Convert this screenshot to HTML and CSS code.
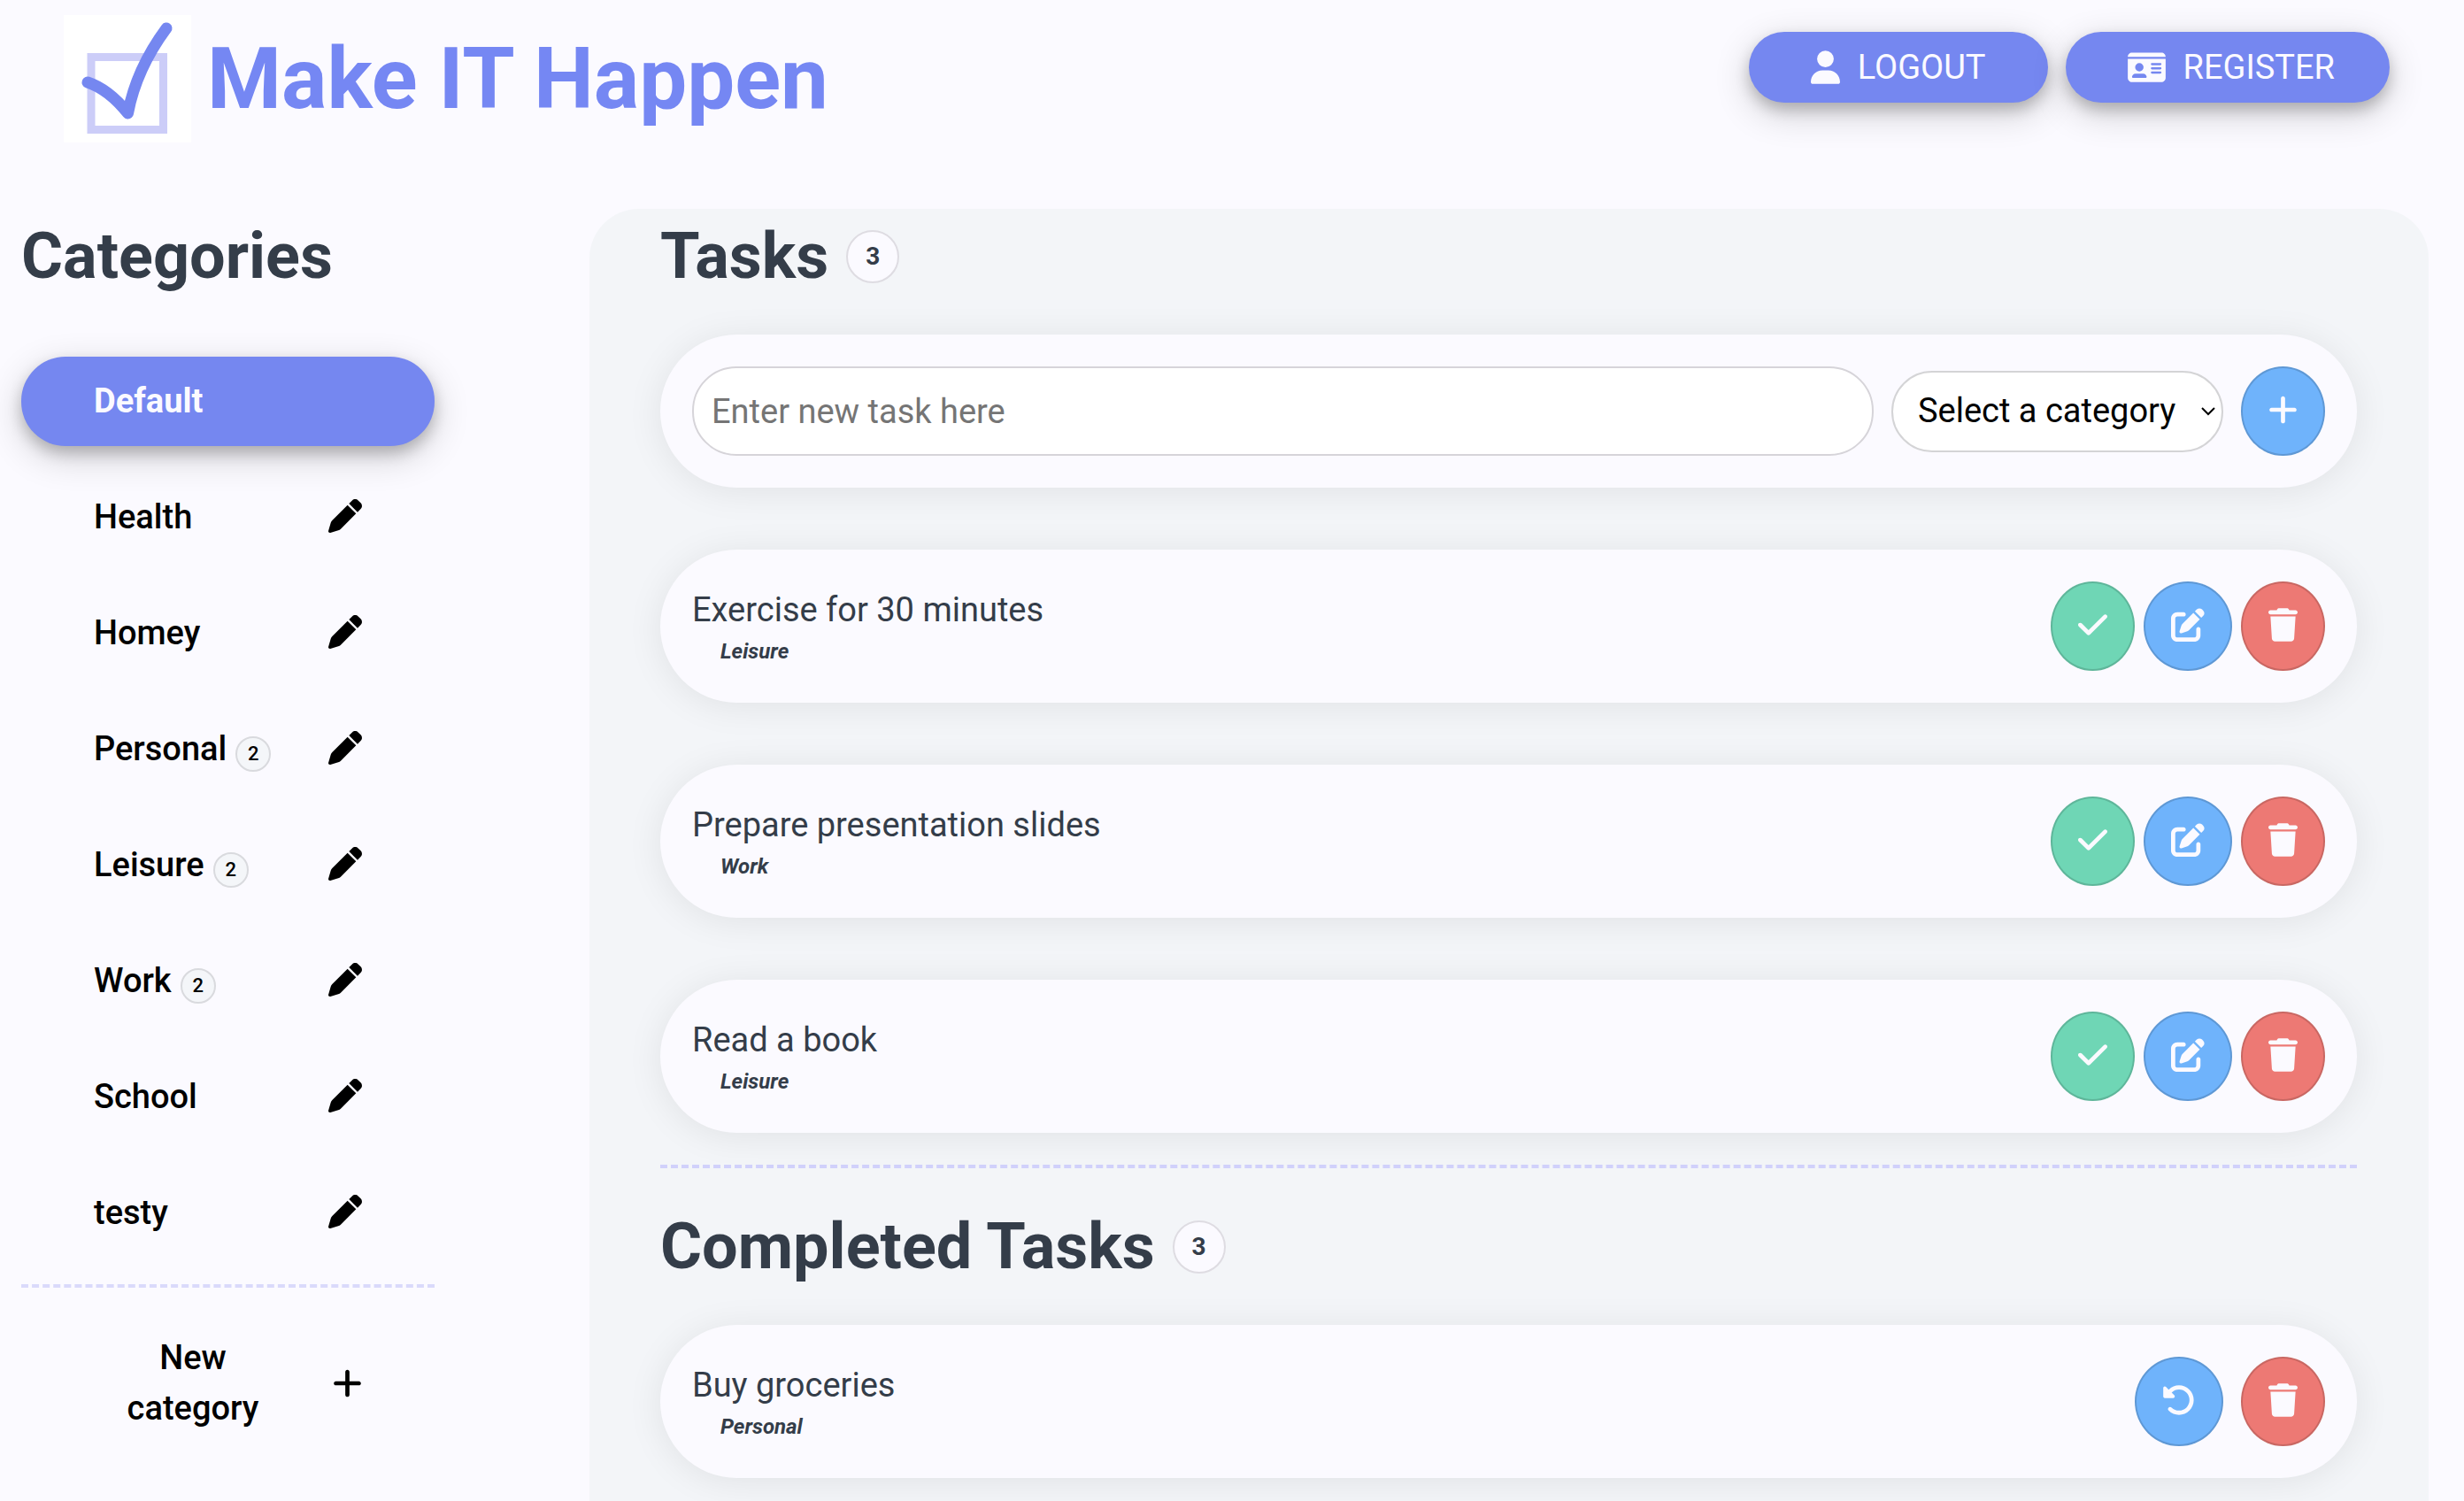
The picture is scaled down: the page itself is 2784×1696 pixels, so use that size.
FILE: index.html
```html
<!DOCTYPE html>
<html lang="en">
<head>
<meta charset="utf-8">
<meta name="viewport" content="width=device-width, initial-scale=1">
<title>Make IT Happen</title>
<link rel="stylesheet" href="styles.css">
</head>
<body>
<svg class="sprite" aria-hidden="true">
  <symbol id="user" viewBox="0 0 448 512"><path d="M224 256A128 128 0 1 0 224 0a128 128 0 1 0 0 256zm-45.7 48C79.8 304 0 383.8 0 482.3C0 498.7 13.3 512 29.7 512H418.3c16.4 0 29.7-13.3 29.7-29.7C448 383.8 368.2 304 269.7 304H178.3z"/></symbol>
  <symbol id="id-card" viewBox="0 0 576 512"><path d="M0 96l576 0c0-35.3-28.7-64-64-64H64C28.7 32 0 60.7 0 96zm0 32V416c0 35.3 28.7 64 64 64H512c35.3 0 64-28.7 64-64V128H0zM64 405.3c0-29.5 23.9-53.3 53.3-53.3H234.7c29.5 0 53.3 23.9 53.3 53.3c0 5.9-4.8 10.7-10.7 10.7H74.7c-5.9 0-10.7-4.8-10.7-10.7zM176 192a64 64 0 1 1 0 128 64 64 0 1 1 0-128zm176 16c0-8.800 7.200-16 16-16H496c8.800 0 16 7.200 16 16s-7.200 16-16 16H368c-8.800 0-16-7.200-16-16zm0 64c0-8.800 7.200-16 16-16H496c8.800 0 16 7.200 16 16s-7.200 16-16 16H368c-8.800 0-16-7.200-16-16zm0 64c0-8.800 7.200-16 16-16H496c8.800 0 16 7.200 16 16s-7.200 16-16 16H368c-8.800 0-16-7.200-16-16z"/></symbol>
  <symbol id="pen" viewBox="0 0 512 512"><path d="M362.700 19.300L314.300 67.700 444.300 197.700l48.400-48.400c25-25 25-65.500 0-90.500L453.300 19.300c-25-25-65.500-25-90.500 0zm-71 71L58.600 323.500c-10.400 10.400-18 23.300-22.200 37.400L1 481.200C-1.500 489.700 .8 498.800 7 505s15.300 8.500 23.700 6.100l120.300-35.400c14.100-4.200 27-11.800 37.400-22.200L421.700 220.300 291.700 90.300z"/></symbol>
  <symbol id="plus" viewBox="0 0 448 512"><path d="M256 80c0-17.700-14.300-32-32-32s-32 14.300-32 32V224H48c-17.700 0-32 14.300-32 32s14.300 32 32 32H192V432c0 17.700 14.300 32 32 32s32-14.300 32-32V288H400c17.700 0 32-14.300 32-32s-14.300-32-32-32H256V80z"/></symbol>
  <symbol id="check" viewBox="0 0 448 512"><path d="M438.600 105.400c12.500 12.500 12.500 32.800 0 45.300l-256 256c-12.500 12.500-32.800 12.500-45.300 0l-128-128c-12.500-12.500-12.500-32.800 0-45.300s32.800-12.500 45.300 0L160 338.700 393.400 105.400c12.500-12.500 32.800-12.500 45.300 0z"/></symbol>
  <symbol id="edit" viewBox="0 0 512 512"><path d="M471.600 21.700c-21.900-21.900-57.300-21.900-79.200 0L362.300 51.700l97.900 97.900 30.100-30.100c21.900-21.900 21.900-57.300 0-79.200L471.600 21.700zm-299.200 220c-6.100 6.100-10.800 13.600-13.500 21.900l-29.600 88.800c-2.900 8.600-.6 18.100 5.800 24.600s15.900 8.700 24.600 5.800l88.800-29.600c8.200-2.700 15.700-7.400 21.900-13.500L437.700 172.300 339.700 74.300 172.400 241.700zM96 64C43 64 0 107 0 160V416c0 53 43 96 96 96H352c53 0 96-43 96-96V320c0-17.700-14.300-32-32-32s-32 14.300-32 32v96c0 17.700-14.300 32-32 32H96c-17.700 0-32-14.300-32-32V160c0-17.700 14.300-32 32-32h96c17.700 0 32-14.300 32-32s-14.300-32-32-32H96z"/></symbol>
  <symbol id="trash" viewBox="0 0 448 512"><path d="M135.200 17.700L128 32H32C14.300 32 0 46.300 0 64S14.300 96 32 96H416c17.700 0 32-14.300 32-32s-14.300-32-32-32H320l-7.200-14.300C307.400 6.800 296.300 0 284.200 0H163.800c-12.100 0-23.200 6.800-28.600 17.700zM416 128H32L53.200 467c1.600 25.300 22.600 45 47.900 45H346.900c25.300 0 46.300-19.700 47.900-45L416 128z"/></symbol>
  <symbol id="undo" viewBox="0 0 512 512"><path d="M48.500 224H40c-13.300 0-24-10.700-24-24V72c0-9.700 5.800-18.500 14.800-22.200s19.300-1.700 26.200 5.200L98.600 96.600c87.600-86.500 228.700-86.200 315.800 1c87.500 87.500 87.500 229.300 0 316.800s-229.300 87.500-316.800 0c-12.500-12.500-12.500-32.800 0-45.300s32.800-12.500 45.300 0c62.500 62.500 163.800 62.500 226.300 0s62.500-163.800 0-226.300c-62.200-62.200-162.700-62.500-225.300-1L185 183c6.900 6.900 8.900 17.200 5.200 26.200s-12.500 14.800-22.200 14.800H48.500z"/></symbol>
</svg>

<header class="header">
  <a class="brand" href="#">
    <svg class="logo" viewBox="0 0 144 144" aria-hidden="true">
      <rect width="144" height="144" fill="#fff"/>
      <rect x="31" y="47.500" width="81.500" height="82" fill="none" stroke="#cccdf8" stroke-width="9"/>
      <path d="M27 76Q51 84 72.500 111Q82 61 116 15" fill="none" stroke="#7587f0" stroke-width="13" stroke-linecap="round" stroke-linejoin="round"/>
    </svg>
    <h1 class="title">Make IT Happen</h1>
  </a>
  <nav class="nav">
    <a class="nav-link" href="#logout"><svg class="icon narrow" aria-hidden="true"><use href="#user"/></svg>LOGOUT</a>
    <a class="nav-link register" href="#register"><svg class="icon wide" aria-hidden="true"><use href="#id-card"/></svg>REGISTER</a>
  </nav>
</header>

<div class="layout">
  <aside class="sidebar">
    <h2 class="heading">Categories</h2>
    <ul class="categories">
      <li class="category active"><a class="category-link" href="#default">Default</a></li>
      <li class="category"><a class="category-link" href="#health">Health</a><button class="plain" aria-label="Edit Health"><svg class="icon"><use href="#pen"/></svg></button></li>
      <li class="category"><a class="category-link" href="#homey">Homey</a><button class="plain" aria-label="Edit Homey"><svg class="icon"><use href="#pen"/></svg></button></li>
      <li class="category"><a class="category-link" href="#personal">Personal<span class="count">2</span></a><button class="plain" aria-label="Edit Personal"><svg class="icon"><use href="#pen"/></svg></button></li>
      <li class="category"><a class="category-link" href="#leisure">Leisure<span class="count">2</span></a><button class="plain" aria-label="Edit Leisure"><svg class="icon"><use href="#pen"/></svg></button></li>
      <li class="category"><a class="category-link" href="#work">Work<span class="count">2</span></a><button class="plain" aria-label="Edit Work"><svg class="icon"><use href="#pen"/></svg></button></li>
      <li class="category"><a class="category-link" href="#school">School</a><button class="plain" aria-label="Edit School"><svg class="icon"><use href="#pen"/></svg></button></li>
      <li class="category"><a class="category-link" href="#testy">testy</a><button class="plain" aria-label="Edit testy"><svg class="icon"><use href="#pen"/></svg></button></li>
    </ul>
    <hr class="divider">
    <button class="new-category"><span>New category</span><svg class="icon narrow" aria-hidden="true"><use href="#plus"/></svg></button>
  </aside>

  <main class="panel">
    <h2 class="heading">Tasks<span class="total">3</span></h2>
    <div class="cards">
      <form class="card task-form">
        <input class="task-input" type="text" aria-label="New task" placeholder="Enter new task here">
        <span class="select-wrap">
          <select class="select" aria-label="Category">
            <option>Select a category</option>
            <option>Health</option>
            <option>Homey</option>
            <option>Personal</option>
            <option>Leisure</option>
            <option>Work</option>
            <option>School</option>
            <option>testy</option>
          </select>
          <svg class="arrow" viewBox="0 0 16 10" aria-hidden="true"><path d="M1 1l7 7 7-7"/></svg>
        </span>
        <button class="action blue" type="button" aria-label="Add task"><svg class="icon narrow"><use href="#plus"/></svg></button>
      </form>
      <article class="card">
        <div class="task"><p class="task-name">Exercise for 30 minutes</p><p class="task-category">Leisure</p></div>
        <div class="actions">
          <button class="action green" aria-label="Complete"><svg class="icon narrow"><use href="#check"/></svg></button>
          <button class="action blue" aria-label="Edit"><svg class="icon"><use href="#edit"/></svg></button>
          <button class="action red" aria-label="Delete"><svg class="icon narrow"><use href="#trash"/></svg></button>
        </div>
      </article>
      <article class="card">
        <div class="task"><p class="task-name">Prepare presentation slides</p><p class="task-category">Work</p></div>
        <div class="actions">
          <button class="action green" aria-label="Complete"><svg class="icon narrow"><use href="#check"/></svg></button>
          <button class="action blue" aria-label="Edit"><svg class="icon"><use href="#edit"/></svg></button>
          <button class="action red" aria-label="Delete"><svg class="icon narrow"><use href="#trash"/></svg></button>
        </div>
      </article>
      <article class="card">
        <div class="task"><p class="task-name">Read a book</p><p class="task-category">Leisure</p></div>
        <div class="actions">
          <button class="action green" aria-label="Complete"><svg class="icon narrow"><use href="#check"/></svg></button>
          <button class="action blue" aria-label="Edit"><svg class="icon"><use href="#edit"/></svg></button>
          <button class="action red" aria-label="Delete"><svg class="icon narrow"><use href="#trash"/></svg></button>
        </div>
      </article>
    </div>
    <hr class="divider section-divider">
    <h2 class="heading">Completed Tasks<span class="total">3</span></h2>
    <div class="cards">
      <article class="card">
        <div class="task"><p class="task-name">Buy groceries</p><p class="task-category">Personal</p></div>
        <div class="actions done">
          <button class="action blue" aria-label="Restore"><svg class="icon"><use href="#undo"/></svg></button>
          <button class="action red" aria-label="Delete"><svg class="icon narrow"><use href="#trash"/></svg></button>
        </div>
      </article>
    </div>
  </main>
</div>
</body>
</html>
```
FILE: styles.css
```css
* { box-sizing: border-box; }

body {
  display: flex;
  flex-direction: column;
  min-height: 100vh;
  margin: 0;
  background: #fbfaff;
  color: #343d49;
  font: 400 38px/57px Roboto, "Noto Sans", sans-serif;
}

h1, h2, p, ul { margin: 0; padding: 0; }
ul { list-style: none; }
a { color: inherit; text-decoration: none; }
button, input, select { margin: 0; font: inherit; }
button { cursor: pointer; }

.sprite { display: none; }

.icon {
  flex: none;
  display: block;
  width: 38px;
  height: 38px;
  fill: currentColor;
}
.icon.narrow { width: 33px; }
.icon.wide { width: 43px; }

/* Header */
.header {
  display: flex;
  justify-content: space-between;
  padding: 17px 84px 75px 72px;
}
.brand {
  display: flex;
  align-items: center;
  gap: 18px;
}
.logo { width: 144px; height: 144px; }
.title {
  color: #7587f3;
  font-size: 96px;
  line-height: 116px;
}
.nav {
  display: flex;
  align-items: flex-start;
  gap: 20px;
  padding-top: 19px;
}
.nav-link {
  display: flex;
  align-items: center;
  gap: 20px;
  height: 80px;
  padding: 0 70px;
  border-radius: 40px;
  background: #7587f0;
  color: #fbfaff;
  box-shadow: 0 8px 16px rgba(0, 0, 0, 0.2), 0 12px 40px rgba(0, 0, 0, 0.19);
}
.nav-link.register { padding-right: 62px; }

.layout {
  flex: 1;
  display: grid;
  grid-template-columns: 467px 1fr;
  gap: 175px;
  padding: 0 40px 0 24px;
}

.heading {
  display: flex;
  align-items: center;
  gap: 20px;
  font-size: 72px;
  line-height: 86px;
}
.divider {
  width: 100%;
  margin: 0;
  border: 0;
  border-top: 4px dashed #d1d1fb;
}

/* Sidebar */
.sidebar { padding-top: 11px; color: #000; }
.sidebar .heading { margin-bottom: 70px; color: #343d49; }
.sidebar .divider { border-color: #dadafb; }
.categories {
  display: grid;
  gap: 30px;
  margin-bottom: 30px;
}
.category, .new-category {
  display: flex;
  align-items: center;
  justify-content: space-between;
  width: 100%;
  padding: 22px 82px;
  font-weight: 500;
}
.category {
  height: 101px;
  border-radius: 50px;
}
.category.active {
  background: #7587f0;
  color: #fbfaff;
  font-weight: 700;
  box-shadow: 0 8px 16px rgba(0, 0, 0, 0.2), 0 12px 40px rgba(0, 0, 0, 0.19);
}
.category-link {
  display: flex;
  align-items: center;
  gap: 10px;
}
.count {
  width: 40px;
  height: 40px;
  margin-top: 10px;
  border: 2px solid #d9dade;
  border-radius: 50%;
  background: #f4f6f9;
  font-size: 22px;
  line-height: 36px;
  text-align: center;
}
.plain {
  padding: 0 0 4px;
  border: 0;
  background: none;
  color: inherit;
}
.new-category {
  gap: 46px;
  margin-top: 29px;
  border: 0;
  background: none;
  color: inherit;
}

/* Task panel */
.panel {
  padding: 11px 81px 22px 80px;
  border-radius: 56px 56px 0 0;
  background: #f3f5f8;
}
.total {
  width: 60px;
  height: 60px;
  border: 2px solid #dedce2;
  border-radius: 50%;
  background: #fbfaff;
  font-size: 28px;
  line-height: 56px;
  text-align: center;
}
.cards {
  display: grid;
  gap: 70px;
  margin-top: 45px;
}
.section-divider { margin: 36px 0 46px; }

.card {
  display: flex;
  align-items: center;
  justify-content: space-between;
  gap: 20px;
  min-height: 173px;
  padding: 36px;
  border-radius: 87px;
  background: #fbfaff;
  box-shadow: 0 4px 40px rgba(0, 0, 0, 0.08);
}
.task-category {
  padding-left: 32px;
  font-size: 24px;
  font-style: italic;
  font-weight: 700;
  line-height: 36px;
}
.task-input {
  flex: 1;
  min-width: 0;
  height: 101px;
  padding: 0 20px;
  border: 2px solid #d6d4d9;
  border-radius: 50px;
  background: #fff;
}
.task-input::placeholder { color: #757575; }

.select-wrap { display: grid; width: 375px; }
.select {
  grid-area: 1 / 1;
  height: 92px;
  padding: 0 28px;
  border: 2px solid #d4d4d6;
  border-radius: 46px;
  background: #fff;
  color: #000;
  appearance: none;
}
.arrow {
  grid-area: 1 / 1;
  align-self: center;
  justify-self: end;
  width: 16px;
  height: 10px;
  margin-right: 9px;
  fill: none;
  stroke: #000;
  stroke-width: 2;
  pointer-events: none;
}

.actions { display: flex; gap: 10px; }
.actions.done { gap: 20px; }
.action {
  flex: none;
  height: 101px;
  padding: 0 29px 4px;
  border: 2px solid rgba(0, 0, 0, 0.15);
  border-radius: 50%;
  color: #fbfaff;
}
.green { background: #6fd6b5; }
.blue { background: #6fb3fb; }
.red { background: #ed7974; }
```
